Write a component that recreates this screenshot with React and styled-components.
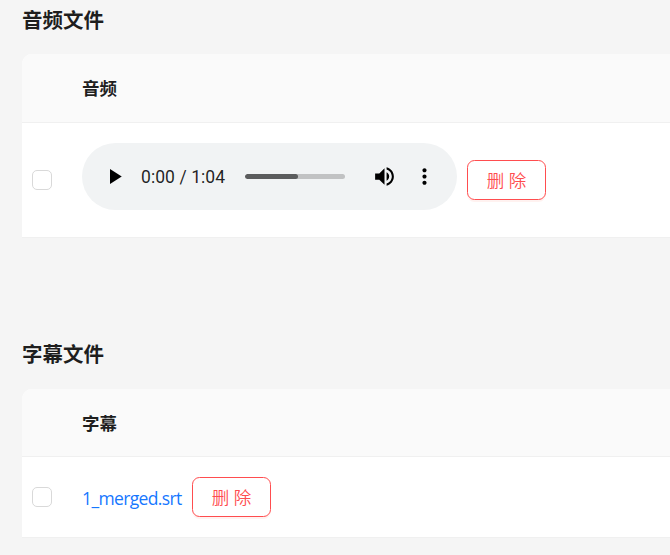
import React from "react";
import styled, { createGlobalStyle } from "styled-components";

const GlobalStyle = createGlobalStyle`
  *, *::before, *::after { box-sizing: border-box; }
  body {
    margin: 0;
    background: #f5f5f5;
    color: rgba(0, 0, 0, 0.88);
    font-family: "Noto Sans", "Noto Sans CJK SC", sans-serif;
    font-size: 17.5px;
  }
`;

const Page = styled.main`
  height: 555px;
  padding: 4px 0 0 22px;
  overflow: hidden;
`;

const Section = styled.section`
  height: ${(p) => p.$height}px;
`;

const Title = styled.h3`
  margin: 0 0 ${(p) => p.$gap}px;
  height: 30px;
  font-family: "Noto Sans CJK SC", sans-serif;
  font-size: 20.5px;
  line-height: 30px;
  font-weight: 700;
`;

const Table = styled.div`
  border-radius: 10px 0 0 0;
  overflow: hidden;
  background: #fff;
`;

const HeaderRow = styled.div`
  display: flex;
  align-items: center;
  height: ${(p) => p.$height}px;
  padding: 0 0 1px 60px;
  background: #fafafa;
  border-bottom: 1px solid #f0f0f0;
  font-family: "Noto Sans CJK SC", sans-serif;
  font-size: 17.5px;
  font-weight: 700;
`;

const Row = styled.div`
  display: flex;
  align-items: flex-start;
  height: ${(p) => p.$height}px;
  padding: 20px 0 0 10px;
  border-bottom: 1px solid #f0f0f0;
`;

const Checkbox = styled.input.attrs({ type: "checkbox" })`
  appearance: none;
  flex: none;
  width: 20px;
  height: 20px;
  margin: ${(p) => p.$top}px 30px 0 0;
  border: 1px solid #d9d9d9;
  border-radius: 5px;
  background: #fff;
`;

const DeleteButton = styled.button`
  flex: none;
  width: 79px;
  height: 40px;
  margin: ${(p) => p.$top}px 0 0 10px;
  padding: 0 0 1px;
  border: 1px solid #ff4d4f;
  border-radius: 7.5px;
  background: #fff;
  box-shadow: 0 2px 0 rgba(255, 38, 5, 0.06);
  color: #ff4d4f;
  font-family: "Noto Sans CJK SC", sans-serif;
  font-size: 17.5px;
  font-weight: 350;
  line-height: 26px;
  word-spacing: 0.4px;
  white-space: nowrap;
`;

const FileLink = styled.a`
  width: 100px;
  margin-top: 8px;
  color: #1677ff;
  font-family: "Open Sans", "Noto Sans", sans-serif;
  font-size: 17.5px;
  line-height: 27px;
  letter-spacing: -0.63px;
  white-space: nowrap;
  text-decoration: none;
`;

const Player = styled.div`
  display: flex;
  align-items: center;
  width: 375px;
  height: 67px;
  padding-left: 21px;
  border-radius: 33.5px;
  background: #f1f3f4;
`;

const Icon = styled.svg`
  flex: none;
  width: 25px;
  height: 25px;
  margin-left: ${(p) => p.$gap || 0}px;
  fill: #000;
`;

const Time = styled.span`
  width: 104px;
  padding-left: 13px;
  color: rgba(0, 0, 0, 0.87);
  font-family: Roboto, sans-serif;
  font-size: 17.5px;
  letter-spacing: 0.07px;
  line-height: 24px;
  white-space: nowrap;
`;

const Track = styled.div`
  width: 100px;
  height: 5px;
  margin-left: 13px;
  border-radius: 2.5px;
  background: #c1c2c3;
  overflow: hidden;
`;

const Buffered = styled.div`
  width: 53px;
  height: 5px;
  border-radius: 2.5px;
  background: #5b5c5d;
`;

function AudioPlayer() {
  return (
    <Player>
      <Icon viewBox="0 0 24 24"><path d="M6.7 4.9v14.2L18 12z" /></Icon>
      <Time>0:00 / 1:04</Time>
      <Track><Buffered /></Track>
      <Icon $gap={27} viewBox="0 0 24 24">
        <path d="M3 9v6h4l5 5V4L7 9H3zm13.5 3c0-1.77-1.02-3.29-2.5-4.03v8.05c1.48-.73 2.5-2.25 2.5-4.02zM14 3.23v2.06c2.89.86 5 3.54 5 6.71s-2.11 5.85-5 6.71v2.06c4.01-.91 7-4.49 7-8.77s-2.99-7.86-7-8.77z" />
      </Icon>
      <Icon $gap={15} viewBox="0 0 24 24">
        <path d="M12 8c1.1 0 2-.9 2-2s-.9-2-2-2-2 .9-2 2 .9 2 2 2zm0 2c-1.1 0-2 .9-2 2s.9 2 2 2 2-.9 2-2-.9-2-2-2zm0 6c-1.1 0-2 .9-2 2s.9 2 2 2 2-.9 2-2-.9-2-2-2z" />
      </Icon>
    </Player>
  );
}

export default function App() {
  return (
    <>
      <GlobalStyle />
      <Page>
        <Section $height={334}>
          <Title $gap={20}>音频文件</Title>
          <Table>
            <HeaderRow $height={69}>音频</HeaderRow>
            <Row $height={115}>
              <Checkbox $top={27} aria-label="音频" />
              <AudioPlayer />
              <DeleteButton $top={17}>删 除</DeleteButton>
            </Row>
          </Table>
        </Section>
        <Section $height={217}>
          <Title $gap={21}>字幕文件</Title>
          <Table>
            <HeaderRow $height={68}>字幕</HeaderRow>
            <Row $height={81}>
              <Checkbox $top={10} aria-label="字幕" />
              <FileLink href="#">1_merged.srt</FileLink>
              <DeleteButton $top={0}>删 除</DeleteButton>
            </Row>
          </Table>
        </Section>
      </Page>
    </>
  );
}
